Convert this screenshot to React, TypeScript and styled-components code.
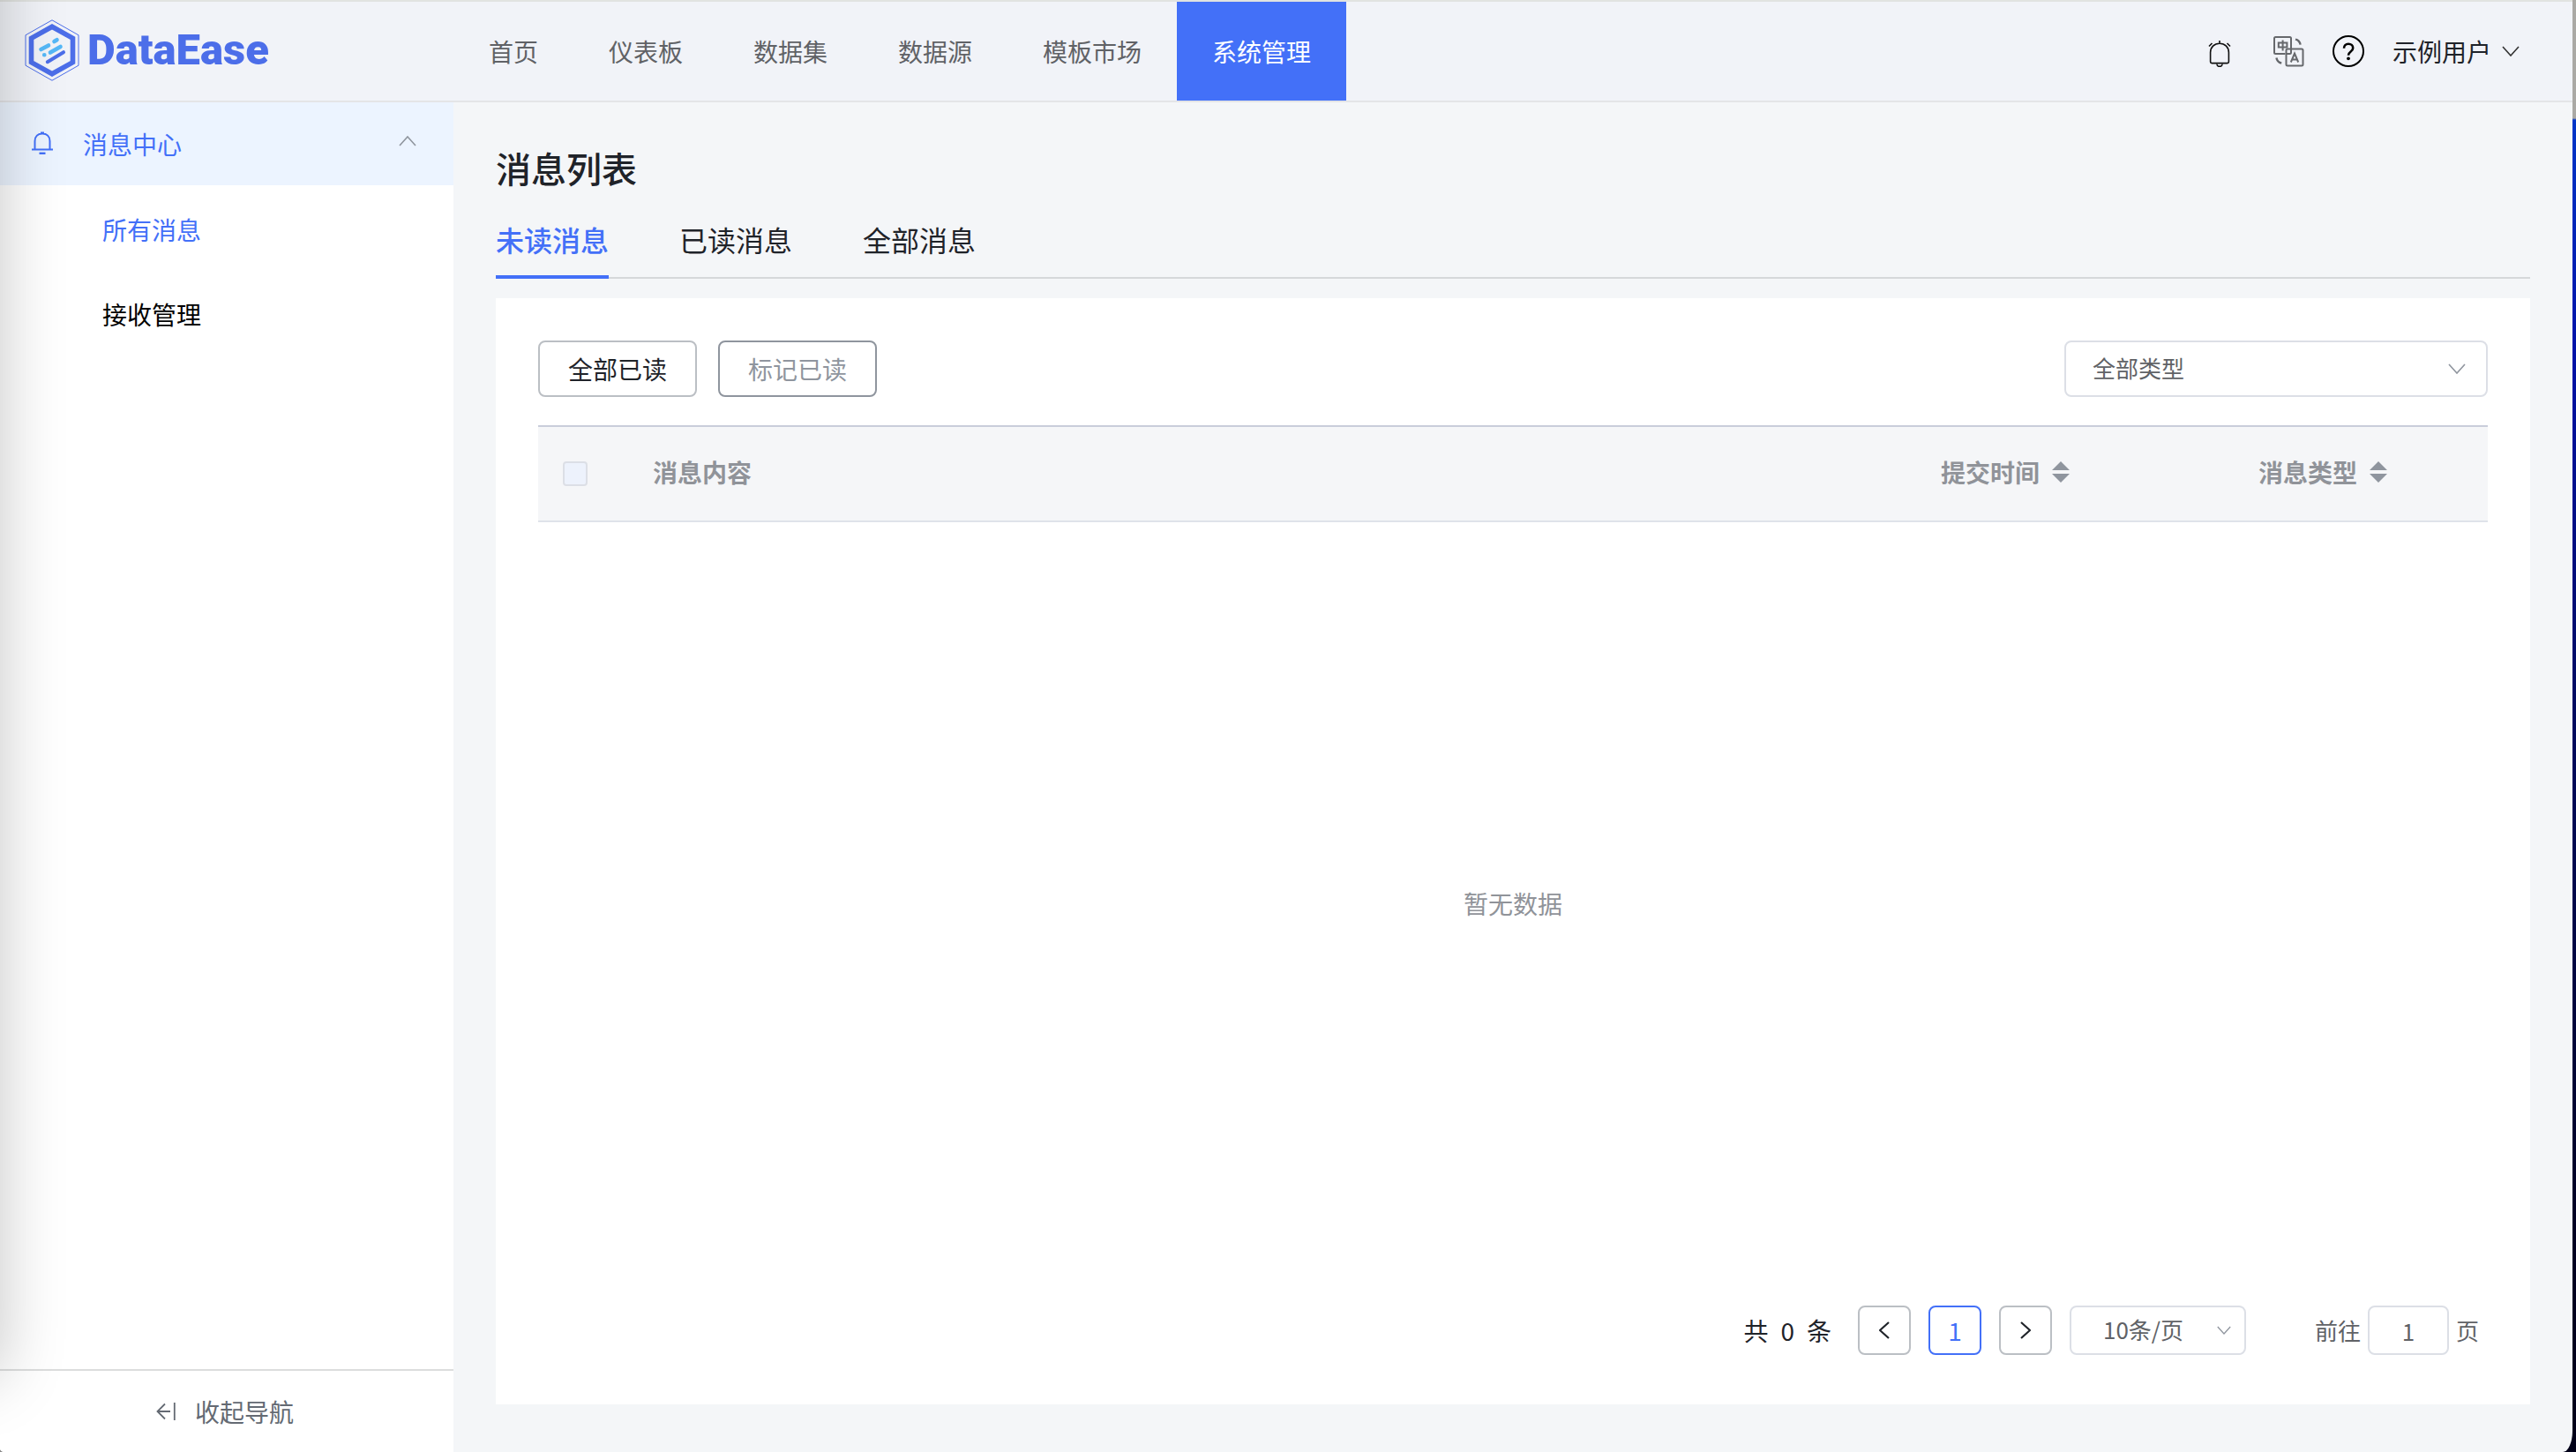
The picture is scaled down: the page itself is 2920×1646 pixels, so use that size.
import React, { useState } from "react";
import styled, { createGlobalStyle } from "styled-components";

const color = {
  primary: "#4370f8",
  brand: "#4c6ee9",
  brandLight: "#55b8f7",
  ink: "#1f2329",
  text: "#606266",
  muted: "#909399",
  slate: "#8f959e",
  line: "#dcdfe6",
  page: "#f4f6f8",
};

const GlobalStyle = createGlobalStyle`
  *, *::before, *::after { box-sizing: border-box; }
  body {
    margin: 0;
    font-family: "Noto Sans CJK SC", sans-serif;
    font-size: 28px;
    line-height: 40px;
    color: ${color.ink};
  }
  button, input, select { font: inherit; color: inherit; margin: 0; }
  button { border: 0; padding: 0; background: none; cursor: pointer; }
  svg { display: block; flex: none; }
`;

const Desktop = styled.div`
  min-height: 100vh;
  display: flex;
  padding-right: 4px;
  background:
    linear-gradient(#aaa9a5 0 134px, #0036c8 136px, #0012a8 400px, #000a60 800px, #000022 1400px, #000018) right / 50% 100% no-repeat,
    #8a8a8a;
`;

const Window = styled.div`
  position: relative;
  flex: 1;
  min-width: 0;
  display: flex;
  flex-direction: column;
  overflow: hidden;
  background: ${color.page};
  border-radius: 0 0 11px 5px / 0 0 24px 4px;

  &::after {
    content: "";
    position: absolute;
    top: -200px;
    bottom: 86px;
    left: -200px;
    width: 200px;
    box-shadow: 0 0 75px rgba(0, 0, 0, 0.23);
    pointer-events: none;
  }
`;

const Header = styled.header`
  display: flex;
  height: 116px;
  border-top: 2px solid #e1e3e1;
  border-bottom: 2px solid #e4e5e7;
  background: #f1f3f8;
`;

const Brand = styled.a`
  display: flex;
  align-items: center;
  gap: 9px;
  width: 514px;
  padding: 0 0 2px 28px;
  color: ${color.brand};
  font: 900 49px/56px Roboto, sans-serif;
  text-decoration: none;
`;

const Nav = styled.nav`
  display: flex;
`;

const NavLink = styled.a<{ $active?: boolean }>`
  display: flex;
  align-items: center;
  padding: 0 40px;
  text-decoration: none;
  color: ${(p) => (p.$active ? "#fff" : color.text)};
  background: ${(p) => (p.$active ? color.primary : "transparent")};
`;

const Tools = styled.div`
  display: flex;
  align-items: center;
  gap: 32px;
  margin-left: auto;
  padding-right: 60px;
`;

const IconButton = styled.button<{ $wide?: boolean }>`
  display: flex;
  align-items: ${(p) => (p.$wide ? "flex-end" : "center")};
  justify-content: center;
  width: ${(p) => (p.$wide ? 56 : 36)}px;
  height: 36px;
`;

const UserButton = styled.button`
  display: flex;
  align-items: center;
  gap: 12px;
`;

const Body = styled.div`
  flex: 1;
  display: flex;
`;

const Sidebar = styled.aside`
  display: flex;
  flex-direction: column;
  width: 514px;
  background: #fff;
`;

const MenuTitle = styled.button`
  display: flex;
  align-items: center;
  gap: 34px;
  width: 100%;
  height: 94px;
  padding: 0 42px 0 36px;
  color: ${color.primary};
  background: #ecf4ff;

  span { flex: 1; text-align: left; }
  svg:first-child { margin-bottom: 2px; }
  svg:last-child { margin-bottom: 6px; }
`;

const SubMenu = styled.ul`
  flex: 1;
  margin: 0;
  padding: 2px 0;
  list-style: none;
`;

const SubLink = styled.a<{ $active?: boolean }>`
  display: flex;
  align-items: center;
  height: 96px;
  padding-left: 116px;
  text-decoration: none;
  color: ${(p) => (p.$active ? color.primary : "#000")};
`;

const Collapse = styled.button`
  display: flex;
  align-items: center;
  justify-content: center;
  gap: 22px;
  height: 94px;
  padding-right: 4px;
  border-top: 2px solid #dcdddd;
  color: #646a73;
`;

const Main = styled.main`
  flex: 1;
  min-width: 0;
  display: flex;
  flex-direction: column;
  padding: 50px 48px 54px;
`;

const Title = styled.h1`
  margin: 0;
  font-size: 40px;
  line-height: 48px;
  font-weight: 500;
`;

const Tabs = styled.div`
  display: flex;
  gap: 80px;
  height: 102px;
  border-bottom: 2px solid #d5d8da;
`;

const Tab = styled.button<{ $active: boolean }>`
  height: 102px;
  padding-top: 16px;
  font-size: 32px;
  font-weight: ${(p) => (p.$active ? 500 : 400)};
  color: ${(p) => (p.$active ? color.primary : color.ink)};
  border-bottom: 4px solid ${(p) => (p.$active ? color.primary : "transparent")};
`;

const Card = styled.section`
  flex: 1;
  display: flex;
  flex-direction: column;
  margin-top: 22px;
  padding: 48px 48px 56px;
  background: #fff;
`;

const Toolbar = styled.div`
  display: flex;
  gap: 24px;
  margin-bottom: 32px;
`;

const ActionButton = styled.button`
  width: 180px;
  height: 64px;
  border: 2px solid #bbbfc4;
  border-radius: 8px;

  &:disabled {
    color: ${color.slate};
    border-color: ${color.slate};
    cursor: default;
  }
`;

const SelectBox = styled.label<{ $compact?: boolean }>`
  display: grid;
  align-items: center;
  width: ${(p) => (p.$compact ? 200 : 480)}px;
  height: ${(p) => (p.$compact ? 56 : 64)}px;
  margin-left: ${(p) => (p.$compact ? "0" : "auto")};
  font-size: 26px;
  color: ${color.text};

  select {
    grid-area: 1 / 1;
    width: 100%;
    height: 100%;
    padding: 0 ${(p) => (p.$compact ? 36 : 30)}px 2px;
    border: 2px solid ${color.line};
    border-radius: 8px;
    background: #fff;
    appearance: none;
  }

  svg {
    grid-area: 1 / 1;
    justify-self: end;
    margin-right: ${(p) => (p.$compact ? 17 : 25)}px;
    pointer-events: none;
  }
`;

const Table = styled.table`
  width: 100%;
  table-layout: fixed;
  border-collapse: separate;
  border-spacing: 0;

  th {
    height: 110px;
    padding: 0 20px 4px;
    text-align: left;
    font-weight: 700;
    color: ${color.muted};
    background: #f5f6f8;
    border-top: 2px solid #c9cdda;
    border-bottom: 2px solid #dfe3ea;
  }
  th:first-child { padding: 0 0 0 28px; }
`;

const CheckBox = styled.input`
  display: block;
  width: 28px;
  height: 28px;
  appearance: none;
  border: 2px solid ${color.line};
  border-radius: 4px;
  background: #edf2fc;
`;

const SortButton = styled.button`
  display: flex;
  align-items: center;
  gap: 14px;
`;

const Empty = styled.div`
  flex: 1;
  display: flex;
  align-items: center;
  justify-content: center;
  margin-bottom: 24px;
  color: ${color.muted};
`;

const Pagination = styled.div`
  display: flex;
  align-items: center;
  justify-content: flex-end;
  gap: 20px;
  padding-right: 10px;
`;

const Total = styled.span`
  display: flex;
  gap: 14px;
  margin-right: 10px;
`;

const PageButton = styled.button<{ $active?: boolean }>`
  display: flex;
  align-items: center;
  justify-content: center;
  width: 60px;
  height: 56px;
  border: 2px solid ${(p) => (p.$active ? color.primary : "#bbbfc4")};
  border-radius: 8px;
  color: ${(p) => (p.$active ? color.primary : color.ink)};
`;

const Jump = styled.label`
  display: flex;
  align-items: center;
  gap: 8px;
  margin-left: 58px;
  font-size: 26px;
  color: ${color.text};

  input {
    width: 92px;
    height: 56px;
    text-align: center;
    border: 2px solid ${color.line};
    border-radius: 8px;
    background: #fff;
  }
`;

const Logo = () => (
  <svg width="62" height="70" viewBox="0 0 62 70" fill="none">
    <path d="M31 .8 61 17.8V52.2L31 69.2 1 52.2V17.8Z" stroke={color.brand} strokeWidth="1" />
    <path d="M31 8.2 54.5 21.4V48.6L31 61.8 7.5 48.6V21.4Z" stroke={color.brand} strokeWidth="5.6" />
    <g strokeLinecap="round" strokeWidth="4.6" stroke={color.brandLight}>
      <path d="M18.5 34 27 29.5M33.500 25 36.500 23.200M29 37.500 40.500 31M22.200 40.300h.1" />
      <path d="M25.800 48.200 44 37.200" stroke={color.brand} strokeWidth="4" />
    </g>
  </svg>
);

const RingingBell = () => (
  <svg width="26" height="30" viewBox="0 0 26 30" fill="none" stroke="#111" strokeWidth="1.6">
    <path d="M13 0v3.500M2.600 24V13.500C2.600 7.500 7 3.300 13 3.300s10.400 4.200 10.400 10.200V24c0 1-.6 1.600-1.600 1.600H4.200c-1 0-1.600-.6-1.600-1.600Z" />
    <path d="M9.800 26.500c.3 2 1.500 2.900 3.200 2.900s2.900-.9 3.200-2.900M1 6.500 4.500 3M25 6.500 21.500 3" />
  </svg>
);

const Translate = () => (
  <svg width="36" height="36" viewBox="0 0 36 36" fill="none" stroke="#66686c" strokeWidth="2">
    <path d="M14.500 21H3.500A1.500 1.500 0 0 1 2 19.500v-16A1.500 1.500 0 0 1 3.500 2h16A1.500 1.500 0 0 1 21 3.500v11.500" />
    <rect x="15.500" y="15.500" width="19" height="19" rx="1.500" />
    <path d="M15.500 21H19.500Q21 21 21 19.500V15.500M6.800 8.500h9.600v5H6.800zM11.600 5.500v12" />
    <path d="M20.800 30.500 25 20.500l4.200 10M22.200 27.400h5.600" />
    <path d="M26 4.600c3 .6 5 2.800 5.600 6M4.400 25.500c.6 3.200 2.600 5.400 5.800 6" strokeWidth="2.400" />
  </svg>
);

const Help = () => (
  <svg width="36" height="36" viewBox="0 0 36 36" fill="none" stroke="#000" strokeWidth="2">
    <circle cx="18" cy="18" r="17" />
    <path d="M13 14.800c0-3 2-5 5-5s5.200 1.900 5.200 4.600c0 2.200-1.300 3.200-2.800 4.300-1.700 1.200-2.400 2-2.400 4.100" strokeWidth="2.600" />
    <circle cx="18" cy="26.300" r="1.900" fill="#000" stroke="none" />
  </svg>
);

const Bell = () => (
  <svg width="24" height="26" viewBox="0 0 24 26" fill="none" stroke={color.primary} strokeWidth="2">
    <path d="M0 20.500h24M3.500 20.500V11C3.500 5.500 7 2.500 12 2.500s8.500 3 8.500 8.500v9.500M10 1.500h4" />
    <path d="M8.500 24.800h7" strokeWidth="2.400" />
  </svg>
);

type ChevronProps = { dir: "up" | "down" | "left" | "right"; w?: number; stroke?: string; weight?: number };

const Chevron = ({ dir, w = 20, stroke = color.slate, weight = 1.6 }: ChevronProps) => {
  const paths = {
    down: "M1 1 10 11 19 1",
    up: "M1 11 10 1 19 11",
    left: "M11 1 1 10 11 19",
    right: "M1 1 11 10 1 19",
  };
  const flat = dir === "up" || dir === "down";
  const box = flat ? [20, 12] : [12, 20];
  return (
    <svg width={w} height={Math.round((w * box[1]) / box[0])} viewBox={`0 0 ${box[0]} ${box[1]}`} fill="none" stroke={stroke} strokeWidth={weight}>
      <path d={paths[dir]} />
    </svg>
  );
};

const SortIcon = () => (
  <svg width="20" height="24" viewBox="0 0 20 24" fill={color.slate}>
    <path d="M10 0 20 10H0ZM10 24 0 14h20Z" />
  </svg>
);

const CollapseIcon = () => (
  <svg width="22" height="22" viewBox="0 0 22 22" fill="none" stroke="#646a73" strokeWidth="1.8">
    <path d="M10 2.500 1.500 11 10 19.500M1.500 11H16M20.800 1v20" />
  </svg>
);

const navItems = ["首页", "仪表板", "数据集", "数据源", "模板市场", "系统管理"];
const tabItems = ["未读消息", "已读消息", "全部消息"];

export default function App() {
  const [tab, setTab] = useState(0);
  const [jump, setJump] = useState("1");

  return (
    <Desktop>
      <GlobalStyle />
      <Window>
        <Header>
          <Brand href="#"><Logo />DataEase</Brand>
          <Nav>
            {navItems.map((item) => (
              <NavLink key={item} href="#" $active={item === "系统管理"}>{item}</NavLink>
            ))}
          </Nav>
          <Tools>
            <IconButton $wide aria-label="消息"><RingingBell /></IconButton>
            <IconButton aria-label="语言"><Translate /></IconButton>
            <IconButton aria-label="帮助"><Help /></IconButton>
            <UserButton>示例用户<Chevron dir="down" stroke="#333" /></UserButton>
          </Tools>
        </Header>
        <Body>
          <Sidebar>
            <MenuTitle aria-expanded="true">
              <Bell />
              <span>消息中心</span>
              <Chevron dir="up" />
            </MenuTitle>
            <SubMenu>
              <li><SubLink href="#" $active>所有消息</SubLink></li>
              <li><SubLink href="#">接收管理</SubLink></li>
            </SubMenu>
            <Collapse><CollapseIcon />收起导航</Collapse>
          </Sidebar>
          <Main>
            <Title>消息列表</Title>
            <Tabs role="tablist">
              {tabItems.map((item, i) => (
                <Tab key={item} role="tab" aria-selected={tab === i} $active={tab === i} onClick={() => setTab(i)}>
                  {item}
                </Tab>
              ))}
            </Tabs>
            <Card>
              <Toolbar>
                <ActionButton>全部已读</ActionButton>
                <ActionButton disabled>标记已读</ActionButton>
                <SelectBox>
                  <select aria-label="消息类型"><option>全部类型</option></select>
                  <Chevron dir="down" />
                </SelectBox>
              </Toolbar>
              <Table>
                <colgroup>
                  <col width="110" />
                  <col />
                  <col width="360" />
                  <col width="280" />
                </colgroup>
                <thead>
                  <tr>
                    <th><CheckBox type="checkbox" aria-label="全选" disabled /></th>
                    <th>消息内容</th>
                    <th><SortButton>提交时间<SortIcon /></SortButton></th>
                    <th><SortButton>消息类型<SortIcon /></SortButton></th>
                  </tr>
                </thead>
              </Table>
              <Empty>暂无数据</Empty>
              <Pagination>
                <Total><span>共</span><span>0</span><span>条</span></Total>
                <PageButton aria-label="上一页"><Chevron dir="left" w={12} stroke={color.ink} weight={2.2} /></PageButton>
                <PageButton $active>1</PageButton>
                <PageButton aria-label="下一页"><Chevron dir="right" w={12} stroke={color.ink} weight={2.2} /></PageButton>
                <SelectBox $compact>
                  <select aria-label="每页条数"><option>10条/页</option></select>
                  <Chevron dir="down" w={16} />
                </SelectBox>
                <Jump>
                  前往
                  <input value={jump} onChange={(e) => setJump(e.target.value)} />
                  页
                </Jump>
              </Pagination>
            </Card>
          </Main>
        </Body>
      </Window>
    </Desktop>
  );
}
